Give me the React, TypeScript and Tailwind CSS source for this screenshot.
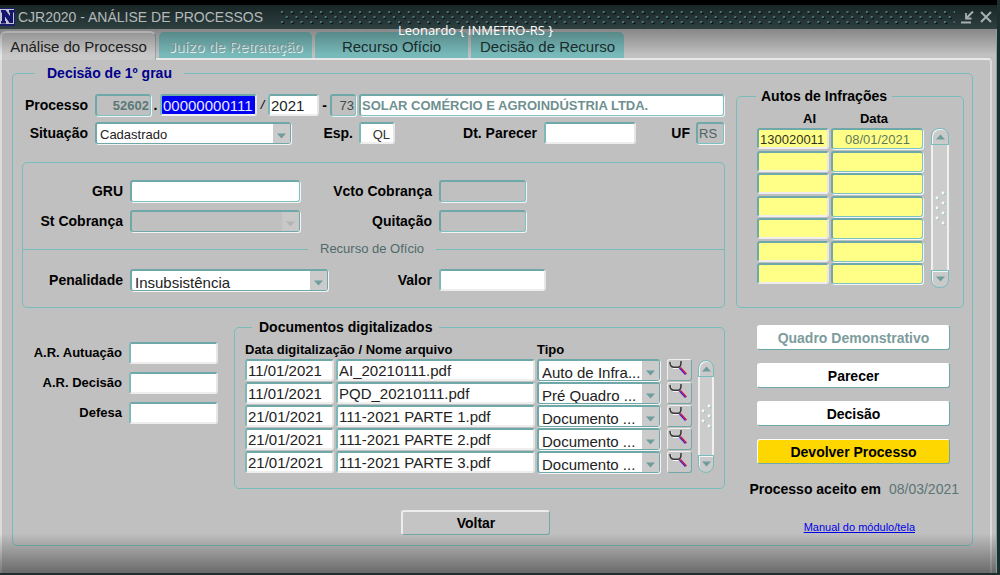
import React from "react";

const FIELD =
  "block min-w-0 h-[22px] rounded-[3px] border-t-2 border-l-2 border-r-2 border-b-2 border-t-[#6ea8a8] border-l-[#7cb8b8] border-r-[#e6e6e6] border-b-[#eeeeee] bg-white px-px pt-[2px] outline-none";
const SUNK =
  "block min-w-0 h-[22px] rounded-[3px] border-t-2 border-l-2 border-r border-b border-t-[#6ea8a8] border-l-[#6ea8a8] border-r-[#7cc4c4] border-b-[#7cc4c4] shadow-[1px_1px_0_#f4f4f4] px-px outline-none";
const LABEL = "shrink-0 whitespace-nowrap text-right text-[14px] leading-5 font-bold text-black";
const GROUP = "min-w-0 rounded-[5px] border border-[#78bcbc]";
const BUTTON =
  "h-[25px] w-full rounded-[3px] border border-t-white border-l-white border-r-[#6ea8a8] border-b-[#6ea8a8] text-center text-[14px] leading-5 font-bold";

function Arrow({ up = false, color = "#6f9c9c" }: { up?: boolean; color?: string }) {
  return (
    <svg width="9" height="6" viewBox="0 0 9 6" aria-hidden="true">
      <path d={up ? "M0 5.5 4.5 0.5 9 5.5Z" : "M0 0.5H9L4.5 5.5Z"} fill={color} />
    </svg>
  );
}

type ComboProps = {
  id?: string;
  label?: string;
  value: string;
  className: string;
  textClass: string;
  disabled?: boolean;
};

function Combo({ id, label, value, className, textClass, disabled = false }: ComboProps) {
  return (
    <div
      className={`relative h-[22px] rounded-[3px] border-t-2 border-l-2 border-r border-b border-[#6ea8a8] shadow-[1px_1px_0_#f4f4f4] ${
        disabled ? "bg-[#c0c0c0]" : "bg-white"
      } ${className}`}
    >
      <select
        id={id}
        aria-label={label}
        disabled={disabled}
        defaultValue={value}
        className={`block h-[19px] w-full appearance-none overflow-hidden bg-transparent pr-[18px] pl-[3px] text-[#222] outline-none ${textClass}`}
      >
        <option value={value}>{value}</option>
      </select>
      <span
        className={`pointer-events-none absolute inset-y-0 right-0 flex w-[17px] items-center justify-center pt-1 ${
          disabled ? "bg-[#c8c8c8]" : "bg-[#cbcbcb]"
        }`}
      >
        <Arrow color={disabled ? "#b4b4b4" : "#6f9c9c"} />
      </span>
    </div>
  );
}

function Scrollbar({ className, dots, name }: { className: string; dots: number[][]; name: string }) {
  return (
    <div className={`flex shrink-0 flex-col ${className}`}>
      <button
        type="button"
        aria-label={`${name}: subir`}
        className="flex h-[17px] w-full items-center justify-center rounded-t-[8px] border border-[#78bcbc] bg-[#cacaca] shadow-[inset_1px_1px_0_#f4f4f4]"
      >
        <Arrow up />
      </button>
      <div className="flex flex-1 items-center justify-center border-x-2 border-x-[#f0f0f0] bg-[#cccccc]">
        <svg width="12" height="34" viewBox="0 0 12 34" aria-hidden="true">
          {dots.map(([x, y]) => (
            <g key={`${x}-${y}`}>
              <circle cx={x + 0.8} cy={y + 0.8} r="1.4" fill="#8cc4c4" />
              <circle cx={x} cy={y} r="1.4" fill="#f8f8f8" />
            </g>
          ))}
        </svg>
      </div>
      <button
        type="button"
        aria-label={`${name}: descer`}
        className="flex h-[18px] w-full items-center justify-center rounded-b-[8px] border border-[#78bcbc] bg-[#cacaca] shadow-[inset_1px_1px_0_#f4f4f4]"
      >
        <Arrow />
      </button>
    </div>
  );
}

function TitleBar() {
  return (
    <header className="flex h-6 items-center bg-linear-to-b from-[#1a2626] to-[#2e4040]">
      <svg width="15" height="18" viewBox="0 0 15 18" aria-hidden="true">
        <rect width="15" height="18" fill="#1c1c6c" />
        <rect x="0" y="1" width="14" height="15" fill="#c4c4d4" />
        <path d="M1 2h4.500l4.500 6V4.500H9V2h5v2.500h-1V15H9.500L5 8.500V13H6v2.500H1V13h1V4.500H1Z" fill="#15156e" />
      </svg>
      <h1 className="ml-[3px] whitespace-nowrap text-[14px] leading-5 text-[#b4baba]">
        CJR2020 - ANÁLISE DE PROCESSOS
      </h1>
      <svg className="ml-4 h-[18px] min-w-0 flex-1" aria-hidden="true">
        <defs>
          <pattern id="grip" width="9.75" height="18" patternUnits="userSpaceOnUse">
            <rect x="3" y="4" width="2.200" height="2.200" fill="#0b1212" />
            <rect x="2" y="3" width="2" height="2" fill="#4c7878" />
            <rect x="7.600" y="9" width="2" height="2.200" fill="#0b1212" />
            <rect x="6.700" y="8" width="2" height="2" fill="#4c7878" />
            <rect x="3" y="14" width="2.200" height="2.200" fill="#0b1212" />
            <rect x="2" y="13" width="2" height="2" fill="#4c7878" />
          </pattern>
        </defs>
        <rect width="100%" height="18" fill="url(#grip)" />
      </svg>
      <button type="button" aria-label="Minimizar" className="ml-[6px]">
        <svg width="13" height="14" viewBox="0 0 13 14" fill="none" stroke="#a8b0b0" aria-hidden="true">
          <path d="M0 12.500H10" strokeWidth="2" />
          <path d="M12 1.500 6 7.500" strokeWidth="2" />
          <path d="M5 3V8.500H10.500" strokeWidth="1.800" />
        </svg>
      </button>
      <button type="button" aria-label="Fechar" className="mr-[5px] ml-[6px]">
        <svg width="12" height="12" viewBox="0 0 12 12" fill="none" stroke="#a8b0b0" strokeWidth="2" aria-hidden="true">
          <path d="M1 1 11 11M11 1 1 11" />
        </svg>
      </button>
    </header>
  );
}

const TAB = "h-[26px] rounded-t-[5px] bg-[#78baba] pt-1 text-center text-[15px] leading-5 whitespace-nowrap text-[#1c3030]";

function Tabs() {
  return (
    <nav role="tablist" className="flex h-[29px] items-end">
      <button
        type="button"
        role="tab"
        aria-selected="true"
        className="z-10 -mb-[2px] h-[29px] w-[156px] rounded-t-[6px] border-t-2 border-r border-l-2 border-t-[#f0f0f0] border-r-[#8fa8a8] border-l-[#e4e4e4] bg-[#c8c8c8] text-center text-[15px] leading-7 whitespace-nowrap text-[#222]"
      >
        Análise do Processo
      </button>
      <button
        type="button"
        role="tab"
        disabled
        className="ml-[3px] h-[26px] w-[153px] rounded-t-[5px] bg-[#78baba] pt-1 text-center text-[15px] leading-5 whitespace-nowrap text-[#7fa9a9] [text-shadow:1px_1px_0_#eef6f6]"
      >
        Juízo de Retratação
      </button>
      <button type="button" role="tab" className={`ml-[3px] w-[153px] ${TAB}`}>
        Recurso Ofício
      </button>
      <button type="button" role="tab" className={`ml-[3px] w-[153px] ${TAB}`}>
        Decisão de Recurso
      </button>
    </nav>
  );
}

function ProcessRows() {
  return (
    <>
      <div className="flex items-center">
        <label htmlFor="proc" className={`mr-[7px] w-[66px] ${LABEL}`}>Processo</label>
        <input id="proc" readOnly defaultValue="52602" className={`${SUNK} w-14 text-right text-[13px] font-bold text-[#5a7878]`} />
        <span className="w-[9px] text-center text-[14px] leading-5 font-bold">.</span>
        <input
          aria-label="Número do processo"
          defaultValue="00000000111"
          className="block h-[22px] w-[97px] rounded-[3px] border-2 border-t-[#6ea8a8] border-r-[#e6e6e6] border-b-[#eeeeee] border-l-[#7cb8b8] bg-[#0000f4] px-px pt-[2px] text-[15px] text-[#e8e8ff] outline-none"
        />
        <span className="w-[11px] text-center text-[13px] leading-5 italic">/</span>
        <input aria-label="Ano" defaultValue="2021" className={`${FIELD} w-[51px] text-[15px] text-[#222]`} />
        <span className="w-[11px] text-center text-[14px] leading-5 font-bold">-</span>
        <input aria-label="Dígito" readOnly defaultValue="73" className={`${SUNK} w-[26px] text-right text-[13px] text-[#3c4c4c]`} />
        <input
          aria-label="Interessado"
          readOnly
          defaultValue="SOLAR COMÉRCIO E AGROINDÚSTRIA LTDA."
          className={`${SUNK} ml-[3px] mr-px flex-1 bg-white text-[13px] font-bold text-[#6f9090]`}
        />
      </div>
      <div className="mt-[6px] flex items-center">
        <label htmlFor="sit" className={`mr-[7px] w-[66px] ${LABEL}`}>Situação</label>
        <Combo id="sit" value="Cadastrado" className="w-[196px]" textClass="pt-[3px] text-[13px] leading-4" />
        <label htmlFor="esp" className={`mr-[6px] w-[62px] ${LABEL}`}>Esp.</label>
        <input id="esp" defaultValue="QL" className={`${FIELD} w-9 pr-[3px] text-right text-[13px] text-[#333]`} />
        <label htmlFor="parecer" className={`mr-[7px] w-[142px] ${LABEL}`}>Dt. Parecer</label>
        <input id="parecer" className={`${FIELD} w-[92px]`} />
        <label htmlFor="uf" className={`mr-[6px] min-w-8 flex-1 ${LABEL}`}>UF</label>
        <input id="uf" readOnly defaultValue="RS" className={`${SUNK} mr-px w-7 text-[13px] text-[#4a6464]`} />
      </div>
    </>
  );
}

function Billing() {
  return (
    <div className={`mt-[18px] pt-[17px] pb-4 ${GROUP}`}>
      <div className="flex items-center">
        <label htmlFor="gru" className={`mr-[7px] w-[100px] ${LABEL}`}>GRU</label>
        <input id="gru" className={`${SUNK} w-[170px] bg-white`} />
        <label htmlFor="vcto" className={`mr-[7px] w-[132px] ${LABEL}`}>Vcto Cobrança</label>
        <input id="vcto" readOnly className={`${SUNK} w-[87px]`} />
      </div>
      <div className="mt-2 flex items-center">
        <label htmlFor="stcob" className={`mr-[7px] w-[100px] ${LABEL}`}>St Cobrança</label>
        <Combo id="stcob" value="" disabled className="w-[170px]" textClass="text-[13px]" />
        <label htmlFor="quit" className={`mr-[7px] w-[132px] ${LABEL}`}>Quitação</label>
        <input id="quit" readOnly className={`${SUNK} w-[87px]`} />
      </div>
      <div className="mt-[7px] flex h-5 items-center">
        <span className="h-px w-[285px] bg-[#78bcbc]" />
        <h2 className="px-3 text-[13px] leading-5 text-[#4f6a6a]">Recurso de Ofício</h2>
        <span className="h-px flex-1 bg-[#78bcbc]" />
      </div>
      <div className="mt-[10px] flex items-center">
        <label htmlFor="pen" className={`mr-[7px] w-[100px] ${LABEL}`}>Penalidade</label>
        <Combo id="pen" value="Insubsistência" className="w-[198px]" textClass="pt-[4px] text-[15px] leading-4" />
        <label htmlFor="valor" className={`mr-[7px] w-[104px] ${LABEL}`}>Valor</label>
        <input id="valor" className={`${FIELD} w-[107px]`} />
      </div>
    </div>
  );
}

const DOCUMENTS = [
  ["11/01/2021", "AI_20210111.pdf", "Auto de Infra..."],
  ["11/01/2021", "PQD_20210111.pdf", "Pré Quadro ..."],
  ["21/01/2021", "111-2021 PARTE 1.pdf", "Documento ..."],
  ["21/01/2021", "111-2021 PARTE 2.pdf", "Documento ..."],
  ["21/01/2021", "111-2021 PARTE 3.pdf", "Documento ..."],
];

function Documents() {
  return (
    <fieldset className={`flex-1 pb-[14px] ${GROUP}`}>
      <legend className="ml-[17px] px-[7px] text-[14px] leading-5 font-bold">Documentos digitalizados</legend>
      <div className="flex items-end pt-1 pr-[10px] pl-[10px]">
        <table className="min-w-0 flex-1 border-collapse">
          <thead>
            <tr className="h-[18px] text-left text-[13px] leading-[18px] font-bold whitespace-nowrap">
              <th colSpan={2} scope="col" className="p-0">Data digitalização / Nome arquivo</th>
              <th scope="col" className="p-0">Tipo</th>
              <th className="p-0" aria-label="Visualizar" />
            </tr>
          </thead>
          <tbody>
            {DOCUMENTS.map(([date, name, type], i) => (
              <tr key={i} className="h-[23px] align-top">
                <td className="w-[91px] p-0 pr-[2px]">
                  <input aria-label={`Data ${i + 1}`} defaultValue={date} className={`${FIELD} w-full text-[15px] text-[#222]`} />
                </td>
                <td className="p-0 pr-[2px]">
                  <input aria-label={`Arquivo ${i + 1}`} defaultValue={name} className={`${FIELD} w-full text-[15px] text-[#222]`} />
                </td>
                <td className="w-[130px] p-0 pr-[7px]">
                  <Combo label={`Tipo ${i + 1}`} value={type} className="w-full" textClass="pt-[4px] text-[15px] leading-4" />
                </td>
                <td className="w-[25px] p-0">
                  <button
                    type="button"
                    aria-label={`Visualizar ${name}`}
                    className="flex h-[22px] w-[25px] items-start justify-start rounded-[3px] border border-t-[#f0f0f0] border-r-[#74a8a8] border-b-[#74a8a8] border-l-[#f0f0f0] bg-[#c6c6c6]"
                  >
                    <svg width="22" height="18" viewBox="0 0 22 18" fill="none" aria-hidden="true">
                      <path d="M3 2.500V6L5 8.500H10.500" stroke="#f4f4f4" strokeWidth="1" />
                      <path d="M2 2C2 5 3 7 5.500 7.200H10.500C12.500 7 13.200 5 13 1" stroke="#383838" strokeWidth="1.500" />
                      <path d="M11.500 8 17.500 14.500" stroke="#3a22d8" strokeWidth="1.500" />
                      <path d="M12.500 7.500 18.500 14" stroke="#d01848" strokeWidth="1.300" />
                    </svg>
                  </button>
                </td>
              </tr>
            ))}
          </tbody>
        </table>
        <Scrollbar
          name="Documentos"
          className="mb-px ml-[6px] h-[113px] w-4"
          dots={[[9, 7], [3, 12], [9, 17], [3, 22], [9, 27]]}
        />
      </div>
    </fieldset>
  );
}

const DATES = [
  ["ar-autuacao", "A.R. Autuação"],
  ["ar-decisao", "A.R. Decisão"],
  ["defesa", "Defesa"],
];

const NOTICES = [["130020011", "08/01/2021"], ["", ""], ["", ""], ["", ""], ["", ""], ["", ""], ["", ""]];

function Notices() {
  return (
    <fieldset className={`mt-[3px] pb-[21px] ${GROUP}`}>
      <legend className="ml-[19px] px-[5px] text-[14px] leading-5 font-bold">Autos de Infrações</legend>
      <div className="flex items-end pt-1 pl-5">
        <table className="h-[176px] border-collapse">
          <thead>
            <tr className="h-[18px] text-[13px] leading-[18px] font-bold">
              <th scope="col" className="p-0 pr-[15px] text-right">AI</th>
              <th scope="col" className="p-0 pr-[6px] text-center">Data</th>
            </tr>
          </thead>
          <tbody>
            {NOTICES.map(([ai, date], i) => (
              <tr key={i} className="align-top">
                <td className="w-[74px] p-0 pr-[2px]">
                  <input aria-label={`AI ${i + 1}`} defaultValue={ai} className="block h-[21px] w-full rounded-[3px] border-2 border-t-[#6ea8a8] border-r-[#e6e6e6] border-b-[#eeeeee] border-l-[#6ea8a8] bg-[#ffff88] px-px pt-px text-[13px] text-[#33331c] outline-none" />
                </td>
                <td className="w-[92px] p-0">
                  <input aria-label={`Data ${i + 1}`} readOnly defaultValue={date} className="block h-[21px] w-[92px] rounded-[3px] border-t-2 border-r border-b border-l-2 border-t-[#6ea8a8] border-r-[#7cc4c4] border-b-[#7cc4c4] border-l-[#6ea8a8] bg-[#ffff88] text-center text-[13px] text-[#5f7a5a] shadow-[1px_1px_0_#f4f4f4] outline-none" />
                </td>
              </tr>
            ))}
          </tbody>
        </table>
        <Scrollbar
          name="Autos"
          className="-mb-[2px] ml-2 h-[160px] w-[18px]"
          dots={[[9, 2], [3, 7], [9, 12], [3, 17], [9, 22], [3, 27], [9, 32]]}
        />
      </div>
    </fieldset>
  );
}

export default function App() {
  return (
    <div className="relative flex min-h-screen flex-col bg-[#1f2e2e] pr-[3px] pb-[3px] font-['Liberation_Sans',Arial,sans-serif] text-black">
      <div className="h-[5px] bg-black" />
      <TitleBar />
      <main className="relative flex flex-1 flex-col border-r border-r-[#7fa4a4] bg-[#c0c0c0] pr-1">
        <Tabs />
        <div className="flex-1 rounded-tr-[4px] border-t-2 border-r-2 border-l-2 border-t-[#e8e8e8] border-r-[#dcdcdc] border-l-[#dcdcdc] pt-[3px] pr-[17px] pb-[27px] pl-[10px]">
          <fieldset className={`pb-[10px] ${GROUP}`}>
            <legend className="ml-[22px] px-3 text-[14px] leading-5 font-bold text-[#00008c]">
              Decisão de 1º grau
            </legend>
            <div className="flex gap-[11px] pr-2 pl-[9px]">
              <div className="min-w-0 flex-1 pt-[11px]">
                <ProcessRows />
                <Billing />
                <div className="mt-[9px] flex">
                  <div className="flex flex-col gap-2 pt-[25px] pr-4">
                    {DATES.map(([id, text]) => (
                      <div key={id} className="flex items-center">
                        <label htmlFor={id} className="mr-[7px] w-[100px] text-right text-[13px] leading-5 font-bold whitespace-nowrap">
                          {text}
                        </label>
                        <input id={id} className={`${FIELD} w-[89px]`} />
                      </div>
                    ))}
                  </div>
                  <Documents />
                </div>
                <div className="mt-[21px] pl-[379px]">
                  <button
                    type="button"
                    className="block h-[25px] w-[149px] rounded-[3px] border-t-2 border-r border-b border-l-2 border-t-[#ececec] border-r-[#74a8a8] border-b-[#74a8a8] border-l-[#ececec] bg-[#c4c4c4] text-[14px] leading-5 font-bold"
                  >
                    Voltar
                  </button>
                </div>
              </div>
              <div className="w-[228px] shrink-0">
                <Notices />
                <div className="mt-[17px] flex flex-col gap-[13px] pr-[14px] pl-[21px]">
                  <button type="button" disabled className={`${BUTTON} bg-white text-[#7d9c9c]`}>Quadro Demonstrativo</button>
                  <button type="button" className={`${BUTTON} bg-white`}>Parecer</button>
                  <button type="button" className={`${BUTTON} bg-white`}>Decisão</button>
                  <button type="button" className={`${BUTTON} bg-[#ffd700]`}>Devolver Processo</button>
                </div>
                <p className="mt-[15px] flex justify-end gap-2 pr-[5px] text-[14px] leading-5 whitespace-nowrap">
                  <b>Processo aceito em</b>
                  <span className="text-[#5c7474]">08/03/2021</span>
                </p>
                <p className="mt-5 pr-[49px] text-right text-[11px] leading-4">
                  <a href="#manual" className="text-[#0000e8] underline">Manual do módulo/tela</a>
                </p>
              </div>
            </div>
          </fieldset>
        </div>
        <div className="pointer-events-none absolute inset-x-0 top-0 z-20 h-[26px] bg-linear-to-b from-black/30 to-transparent" />
        <div className="pointer-events-none absolute inset-x-0 bottom-0 z-20 h-10 bg-linear-to-b from-transparent to-black/45" />
      </main>
      <p className="pointer-events-none absolute top-[22px] left-[398px] z-30 font-['Open_Sans',sans-serif] text-[13px] leading-4 whitespace-nowrap text-white">
        Leonardo {"{ INMETRO-RS }"}
      </p>
    </div>
  );
}
